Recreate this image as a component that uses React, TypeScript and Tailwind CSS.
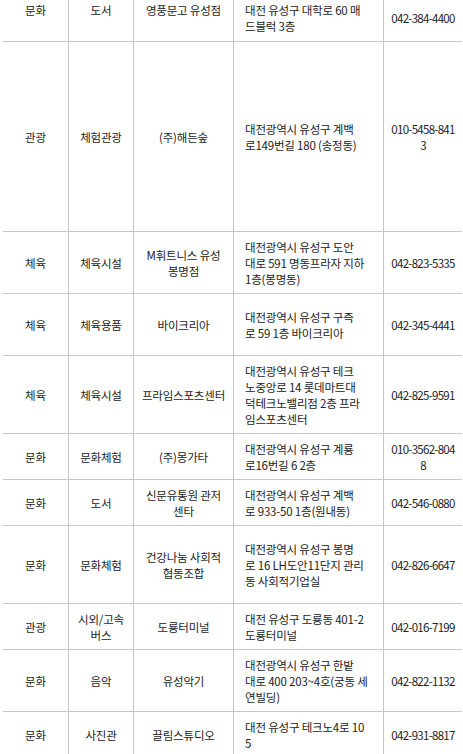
type Row = {
  cat: string;
  sub: string[];
  name: string[];
  addr: string[];
  tel: string[];
  h: string;
};

const rows: Row[] = [
  { cat: '문화', sub: ['도서'], name: ['영풍문고 유성점'], addr: ['대전 유성구 대학로 60 매', '드블럭 3층'], tel: ['042-384-4400'], h: 'h-[42px]' },
  { cat: '관광', sub: ['체험관광'], name: ['(주)해든숲'], addr: ['대전광역시 유성구 계백', '로149번길 180 (송정동)'], tel: ['010-5458-841', '3'], h: 'h-[190px]' },
  { cat: '체육', sub: ['체육시설'], name: ['M휘트니스 유성', '봉명점'], addr: ['대전광역시 유성구 도안', '대로 591 명동프라자 지하', '1층(봉명동)'], tel: ['042-823-5335'], h: 'h-[62px]' },
  { cat: '체육', sub: ['체육용품'], name: ['바이크리아'], addr: ['대전광역시 유성구 구즉', '로 59 1층 바이크리아'], tel: ['042-345-4441'], h: 'h-[62px]' },
  { cat: '체육', sub: ['체육시설'], name: ['프라임스포츠센터'], addr: ['대전광역시 유성구 테크', '노중앙로 14 롯데마트대', '덕테크노밸리점 2층 프라', '임스포츠센터'], tel: ['042-825-9591'], h: 'h-[78px]' },
  { cat: '문화', sub: ['문화체험'], name: ['(주)몽가타'], addr: ['대전광역시 유성구 계룡', '로16번길 6 2층'], tel: ['010-3562-804', '8'], h: 'h-[46px]' },
  { cat: '문화', sub: ['도서'], name: ['신문유통원 관저', '센타'], addr: ['대전광역시 유성구 계백', '로 933-50 1층(원내동)'], tel: ['042-546-0880'], h: 'h-[46px]' },
  { cat: '문화', sub: ['문화체험'], name: ['건강나눔 사회적', '협동조합'], addr: ['대전광역시 유성구 봉명', '로 16 LH도안11단지 관리', '동 사회적기업실'], tel: ['042-826-6647'], h: 'h-[78px]' },
  { cat: '관광', sub: ['시외/고속', '버스'], name: ['도룡터미널'], addr: ['대전 유성구 도룡동 401-2', '도룡터미널'], tel: ['042-016-7199'], h: 'h-[46px]' },
  { cat: '문화', sub: ['음악'], name: ['유성악기'], addr: ['대전광역시 유성구 한밭', '대로 400 203~4호(궁동 세', '연빌딩)'], tel: ['042-822-1132'], h: 'h-[62px]' },
  { cat: '문화', sub: ['사진관'], name: ['끌림스튜디오'], addr: ['대전 유성구 테크노4로 10', '5'], tel: ['042-931-8817'], h: 'h-[46px]' },
];

function Lines({ lines }: { lines: string[] }) {
  return (
    <div>
      {lines.map((l, i) => (
        <div key={i} className="whitespace-nowrap">
          {l}
        </div>
      ))}
    </div>
  );
}

export default function App() {
  return (
    <div
      className="h-[754px] overflow-hidden bg-white text-[11.5px] leading-[16px] tracking-[-0.2px] text-[#222]"
      style={{ fontFamily: '"Noto Sans CJK KR", "Liberation Sans", sans-serif' }}
    >
      <div className="ml-[3px] w-[459px]">
        {rows.map((r, i) => {
          const first = i === 0;
          const cell = `flex border-r border-[#c8c8c8] ${first ? 'items-start pt-[2px]' : 'items-center'}`;
          return (
            <div
              key={i}
              className={`grid grid-cols-[66px_65px_100px_150px_78px] border-b border-[#c8c8c8] ${r.h}`}
            >
              <div className={`${cell} justify-center`}>{r.cat}</div>
              <div className={`${cell} justify-center text-center`}>
                <Lines lines={r.sub} />
              </div>
              <div className={`${cell} justify-center text-center`}>
                <Lines lines={r.name} />
              </div>
              <div className={`${cell} pl-[11px]`}>
                <Lines lines={r.addr} />
              </div>
              <div
                className={`flex justify-center text-center tracking-[-0.7px] ${first ? 'items-start pt-[10px]' : 'items-center'}`}
              >
                <Lines lines={r.tel} />
              </div>
            </div>
          );
        })}
      </div>
    </div>
  );
}
